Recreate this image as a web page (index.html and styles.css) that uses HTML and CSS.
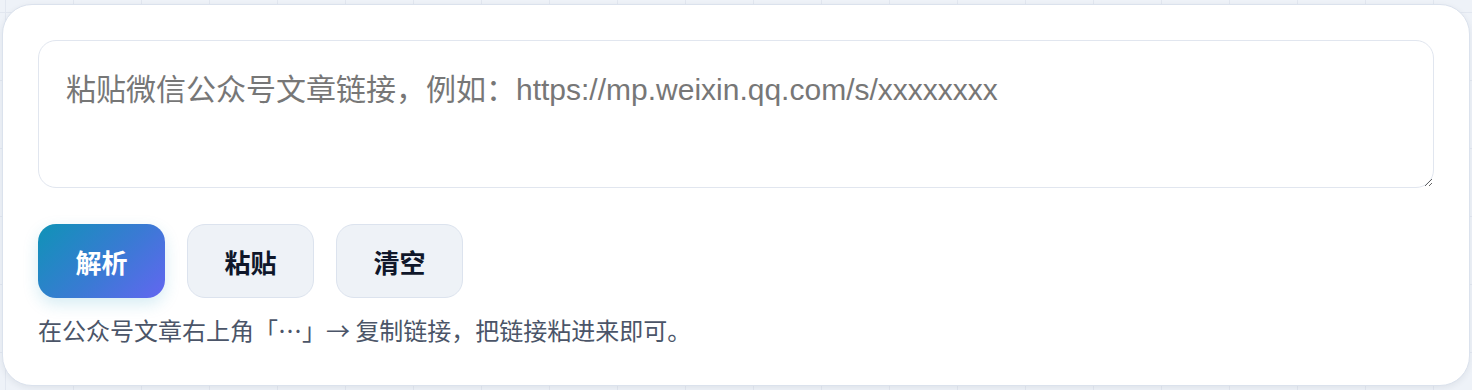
FILE: index.html
```html
<!DOCTYPE html>
<html lang="zh-CN">
<head>
<meta charset="utf-8">
<title>解析</title>
<link rel="stylesheet" href="styles.css">
</head>
<body>
<div class="card">
  <textarea class="input" placeholder="粘贴微信公众号文章链接，例如：https://mp.weixin.qq.com/s/xxxxxxxx"></textarea>
  <div class="actions">
    <button class="btn btn-primary">解析</button>
    <button class="btn">粘贴</button>
    <button class="btn">清空</button>
  </div>
  <p class="hint">在公众号文章右上角「…」→ 复制链接，把链接粘进来即可。</p>
</div>
</body>
</html>
```
FILE: styles.css
```css
html, body {
  margin: 0;
  padding: 0;
}
body {
  width: 1472px;
  height: 390px;
  overflow: hidden;
  background-color: #eef2f8;
  background-image:
    linear-gradient(to right, #e2e7f0 1px, transparent 1px),
    linear-gradient(to bottom, #e2e7f0 1px, transparent 1px);
  background-size: 68px 68px;
  background-position: 5px 12px;
  font-family: "Liberation Sans", "Noto Sans CJK SC", sans-serif;
}
.card {
  box-sizing: border-box;
  margin: 4px 0 0 2px;
  width: 1468px;
  height: 382px;
  padding: 35px 35px 0 35px;
  background: #ffffff;
  border: 1px solid #dbe2ed;
  border-radius: 30px;
  box-shadow: 0 2px 6px rgba(30, 41, 59, 0.07);
}
.input {
  display: block;
  box-sizing: border-box;
  width: 1396px;
  height: 148px;
  margin: 0;
  padding: 26px 27px;
  border: 1.5px solid #e1e6ef;
  border-radius: 18px;
  background: #ffffff;
  font-family: "Liberation Sans", "Noto Sans CJK SC", sans-serif;
  font-size: 30px;
  line-height: 1.5;
  color: #1f2937;
  outline: none;
}
.input::placeholder {
  color: #777777;
}
.actions {
  display: flex;
  gap: 22px;
  margin-top: 36px;
}
.btn {
  box-sizing: border-box;
  width: 127px;
  height: 74px;
  border: 1.5px solid #dce3ee;
  border-radius: 18px;
  background: #eef2f7;
  color: #0f172a;
  font-family: "Liberation Sans", "Noto Sans CJK SC", sans-serif;
  font-size: 26px;
  font-weight: 700;
  cursor: pointer;
}
.btn-primary {
  border: none;
  color: #ffffff;
  background: linear-gradient(135deg, #0f93b7 0%, #3a7ad4 55%, #6366f1 100%);
  box-shadow: 0 6px 16px rgba(20, 150, 190, 0.18);
}
.hint {
  margin: 15px 0 0 0;
  font-family: "Noto Sans CJK SC", sans-serif;
  font-size: 24px;
  line-height: 34px;
  color: #4b5568;
}
```
